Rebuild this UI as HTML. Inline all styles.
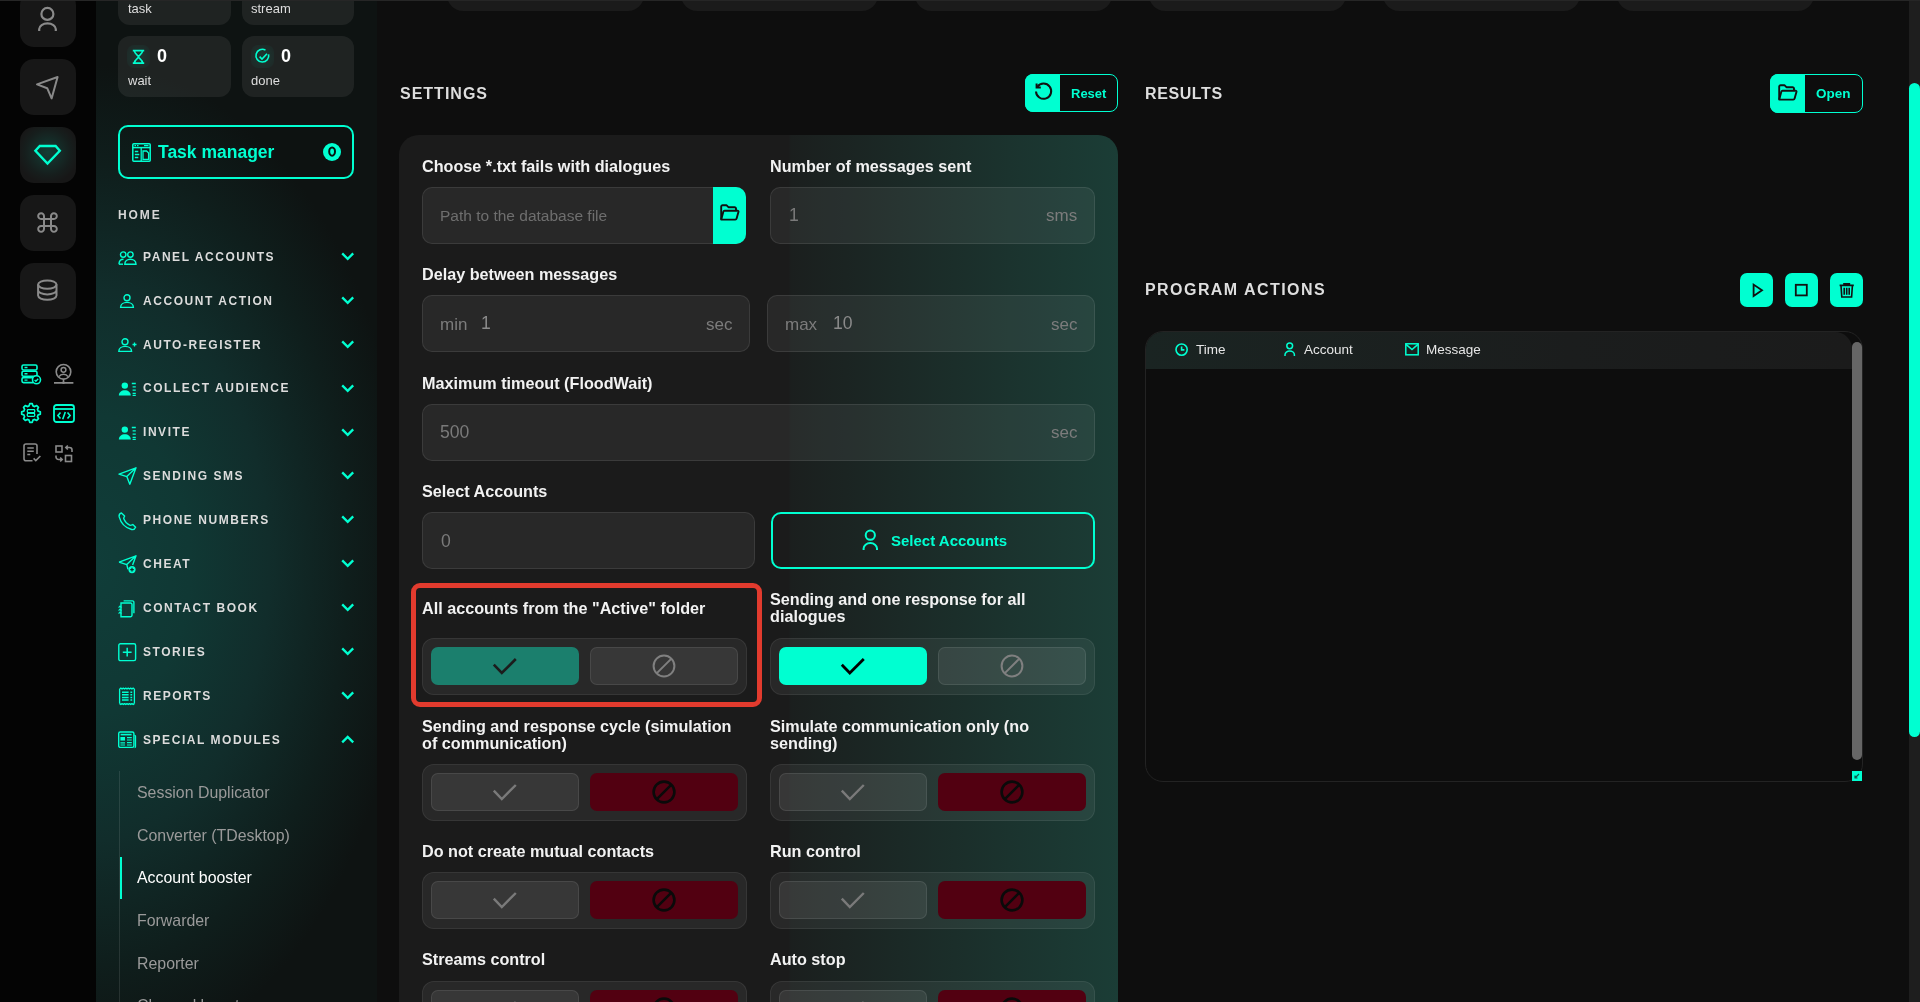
<!DOCTYPE html><html><head><meta charset="utf-8"><style>
html,body{margin:0;padding:0}
body{width:1920px;height:1002px;overflow:hidden;background:#0e0e0e;font-family:"Liberation Sans",sans-serif;position:relative}
.a{position:absolute;box-sizing:border-box}
.t{position:absolute;white-space:nowrap;will-change:transform}
svg{position:absolute;overflow:visible}
</style></head><body>
<div class="a" style="left:0px;top:0px;width:96px;height:1002px;background:#040404"></div>
<div class="a" style="left:20px;top:-9px;width:56px;height:56px;background:#171717;border-radius:14px"></div>
<div class="a" style="left:20px;top:59px;width:56px;height:56px;background:#171717;border-radius:14px"></div>
<div class="a" style="left:20px;top:127px;width:56px;height:56px;background:#171717;border-radius:14px"></div>
<div class="a" style="left:20px;top:195px;width:56px;height:56px;background:#171717;border-radius:14px"></div>
<div class="a" style="left:20px;top:263px;width:56px;height:56px;background:#171717;border-radius:14px"></div>
<div class="a" style="left:20px;top:127px;width:56px;height:56px;border-radius:14px;background:radial-gradient(circle at 50% 45%, rgba(0,255,209,0.16) 0%, rgba(0,255,209,0.09) 30%, rgba(0,255,209,0.03) 55%, rgba(0,0,0,0) 75%)"></div>
<svg style="left:0px;top:0px;" width="96" height="60" viewBox="0 0 96 60" fill="none"><circle cx="47.4" cy="13.9" r="6" stroke="#8a8a8a" stroke-width="2.2"/><path d="M39.2 31 V29 a8.3 5.6 0 0 1 16.6 0 V31" stroke="#8a8a8a" stroke-width="2.2"/></svg>
<svg style="left:0px;top:60px;" width="96" height="60" viewBox="0 0 96 60" fill="none"><path d="M37 24.4 L57.6 17 L51.6 38.4 L47.2 28.2 Z" stroke="#8a8a8a" stroke-width="2" stroke-linejoin="round"/></svg>
<svg style="left:0px;top:127px;" width="96" height="56" viewBox="0 0 96 56" fill="none"><path d="M39.8 19 H55.6 L59.8 23.8 L47.5 36.6 L35.4 23.8 Z" stroke="#00ffd1" stroke-width="2.4" stroke-linejoin="miter"/></svg>
<svg style="left:0px;top:195px;" width="96" height="56" viewBox="0 0 96 56" fill="none"><path d="M44 24 h7 v7 h-7 z M44 24 v-2.8 a2.9 2.9 0 1 0 -2.9 2.8 h2.9 M51 24 v-2.8 a2.9 2.9 0 1 1 2.9 2.8 h-2.9 M44 31 v2.8 a2.9 2.9 0 1 1 -2.9 -2.8 h2.9 M51 31 v2.8 a2.9 2.9 0 1 0 2.9 -2.8 h-2.9" stroke="#8a8a8a" stroke-width="2"/></svg>
<svg style="left:0px;top:263px;" width="96" height="56" viewBox="0 0 96 56" fill="none"><ellipse cx="47.3" cy="21.6" rx="9.2" ry="4.2" stroke="#8a8a8a" stroke-width="2"/><path d="M38.1 21.6 v11 a9.2 4.2 0 0 0 18.4 0 v-11 M38.1 27.2 a9.2 4.2 0 0 0 18.4 0" stroke="#8a8a8a" stroke-width="2"/></svg>
<svg style="left:21px;top:364px;" width="22" height="22" viewBox="0 0 22 22" fill="none"><rect x="1" y="1" width="15" height="5" rx="1.5" stroke="#00ffd1" stroke-width="1.6"/><rect x="1" y="7.3" width="15" height="5" rx="1.5" stroke="#00ffd1" stroke-width="1.6"/><path d="M16 13.6 H2.5 a1.5 1.5 0 0 0 -1.5 1.5 v2 a1.5 1.5 0 0 0 1.5 1.5 H12" stroke="#00ffd1" stroke-width="1.6"/><path d="M3.5 3.5 h3 M3.5 9.8 h3 M3.5 16.1 h3" stroke="#00ffd1" stroke-width="1.4"/><circle cx="15.5" cy="15.8" r="4" stroke="#00ffd1" stroke-width="1.6" fill="#000"/><path d="M13.6 15.9 l1.3 1.3 l2.3 -2.4" stroke="#00ffd1" stroke-width="1.4"/></svg>
<svg style="left:53px;top:363px;" width="22" height="22" viewBox="0 0 22 22" fill="none"><circle cx="10.5" cy="8.8" r="7.3" stroke="#8a8a8a" stroke-width="1.6"/><circle cx="10.5" cy="6.8" r="2.4" stroke="#8a8a8a" stroke-width="1.5"/><path d="M6 13.6 a5 4 0 0 1 9 0" stroke="#8a8a8a" stroke-width="1.5"/><path d="M10.5 16 v3.7 M1 19.9 h19.4" stroke="#8a8a8a" stroke-width="1.6"/><circle cx="10.5" cy="19.8" r="1.3" fill="#8a8a8a"/></svg>
<svg style="left:21px;top:403px;" width="21" height="21" viewBox="0 0 21 21" fill="none"><path d="M19.32 8.75 L19.32 11.25 L17.15 11.90 L16.40 13.72 L17.47 15.70 L15.70 17.47 L13.72 16.40 L11.90 17.15 L11.25 19.32 L8.75 19.32 L8.10 17.15 L6.28 16.40 L4.30 17.47 L2.53 15.70 L3.60 13.72 L2.85 11.90 L0.68 11.25 L0.68 8.75 L2.85 8.10 L3.60 6.28 L2.53 4.30 L4.30 2.53 L6.28 3.60 L8.10 2.85 L8.75 0.68 L11.25 0.68 L11.90 2.85 L13.72 3.60 L15.70 2.53 L17.47 4.30 L16.40 6.28 L17.15 8.10 Z" stroke="#00ffd1" stroke-width="1.7" stroke-linejoin="round"/><rect x="6.3" y="6.6" width="7.4" height="3" rx="0.8" stroke="#00ffd1" stroke-width="1.3"/><rect x="6.3" y="10.4" width="7.4" height="3" rx="0.8" stroke="#00ffd1" stroke-width="1.3"/></svg>
<svg style="left:53px;top:404px;" width="22" height="19" viewBox="0 0 22 19" fill="none"><rect x="1" y="1" width="20" height="17" rx="2.5" stroke="#00ffd1" stroke-width="1.8"/><path d="M1 5 h20" stroke="#00ffd1" stroke-width="1.8"/><path d="M7.5 8.5 l-2.6 3 l2.6 3 M14.5 8.5 l2.6 3 l-2.6 3 M12.3 8 l-2.6 7.2" stroke="#00ffd1" stroke-width="1.6"/></svg>
<svg style="left:23px;top:443px;" width="19" height="20" viewBox="0 0 19 20" fill="none"><path d="M9.5 17.8 H3 a2 2 0 0 1 -2 -2 V3 a2 2 0 0 1 2 -2 H12 a2 2 0 0 1 2 2 V11" stroke="#8a8a8a" stroke-width="1.6"/><path d="M4.3 5 h6.5 M4.3 8.3 h6.5 M4.3 11.6 h3" stroke="#8a8a8a" stroke-width="1.5"/><path d="M10.6 15.4 l2.2 2.2 l4.6 -4.6" stroke="#8a8a8a" stroke-width="1.6"/></svg>
<svg style="left:55px;top:445px;" width="19" height="18" viewBox="0 0 19 18" fill="none"><rect x="1" y="1" width="6" height="6" stroke="#8a8a8a" stroke-width="1.6"/><rect x="10.5" y="10.5" width="6" height="6" stroke="#8a8a8a" stroke-width="1.6"/><path d="M17 7 V5 a2.5 2.5 0 0 0 -2.5 -2.5 H11 M12.8 0.5 l-2 2 l2 2" stroke="#8a8a8a" stroke-width="1.6"/><path d="M1 10.5 V12 a2.5 2.5 0 0 0 2.5 2.5 H7 M5.2 12.5 l2 2 l-2 2" stroke="#8a8a8a" stroke-width="1.6"/></svg>
<div class="a" style="left:96px;top:0px;width:281px;height:1002px;background:radial-gradient(ellipse 315px 500px at 0px 565px, rgb(16,61,57) 0%, rgb(16,56,52) 30%, rgb(17,45,43) 55%, rgb(15,30,28) 80%, rgb(14,19,18) 100%)"></div>
<div class="a" style="left:118px;top:-40px;width:113px;height:65px;background:rgba(255,255,255,0.072);border-radius:12px"></div>
<div class="a" style="left:242px;top:-40px;width:112px;height:65px;background:rgba(255,255,255,0.072);border-radius:12px"></div>
<div class="t" style="left:127.5px;top:2.00px;font-size:13px;line-height:13px;color:#dedede;font-weight:400;letter-spacing:0px;">task</div>
<div class="t" style="left:251px;top:2.00px;font-size:13px;line-height:13px;color:#dedede;font-weight:400;letter-spacing:0px;">stream</div>
<div class="a" style="left:118px;top:36px;width:113px;height:61px;background:rgba(255,255,255,0.072);border-radius:12px"></div>
<div class="a" style="left:242px;top:36px;width:112px;height:61px;background:rgba(255,255,255,0.072);border-radius:12px"></div>
<div class="a" style="left:127px;top:45px;width:23px;height:23px;background:radial-gradient(circle, rgba(0,255,209,0.10) 0%, rgba(0,255,209,0.05) 55%, rgba(0,255,209,0.02) 100%);border-radius:7px"></div>
<div class="a" style="left:251px;top:45px;width:23px;height:23px;background:radial-gradient(circle, rgba(0,255,209,0.10) 0%, rgba(0,255,209,0.05) 55%, rgba(0,255,209,0.02) 100%);border-radius:7px"></div>
<svg style="left:127px;top:45px;" width="23" height="23" viewBox="0 0 23 23" fill="none"><path d="M5.8 5.6 h11.4 M5.8 18.2 h11.4" stroke="#00ffd1" stroke-width="1.8"/><path d="M7.4 5.6 C7.4 9.4 11.5 10.4 11.5 11.9 C11.5 13.4 7.4 14.4 7.4 18.2 M15.6 5.6 C15.6 9.4 11.5 10.4 11.5 11.9 C11.5 13.4 15.6 14.4 15.6 18.2" stroke="#00ffd1" stroke-width="1.6"/></svg>
<svg style="left:251px;top:45px;" width="23" height="23" viewBox="0 0 23 23" fill="none"><path d="M17.6 9.3 a6.4 6.4 0 1 1 -3.1 -4.2" stroke="#00ffd1" stroke-width="1.6"/><path d="M8.6 11.6 l2.4 2.4 l5 -5.2" stroke="#00ffd1" stroke-width="1.6"/></svg>
<div class="t" style="left:157px;top:47.26px;font-size:18px;line-height:18px;color:#fff;font-weight:700;letter-spacing:0px;">0</div>
<div class="t" style="left:280.5px;top:47.26px;font-size:18px;line-height:18px;color:#fff;font-weight:700;letter-spacing:0px;">0</div>
<div class="t" style="left:127.5px;top:74.00px;font-size:13px;line-height:13px;color:#dedede;font-weight:400;letter-spacing:0px;">wait</div>
<div class="t" style="left:251px;top:74.00px;font-size:13px;line-height:13px;color:#dedede;font-weight:400;letter-spacing:0px;">done</div>
<div class="a" style="left:118px;top:125px;width:236px;height:54px;border:2px solid #00ffd1;border-radius:10px;background:rgba(0,0,0,0.03)"></div>
<svg style="left:132px;top:143px;" width="19" height="19" viewBox="0 0 19 19" fill="none"><rect x="0.8" y="0.8" width="17.4" height="17.4" rx="1" stroke="#00ffd1" stroke-width="1.5"/><path d="M0.8 4.6 h17.4" stroke="#00ffd1" stroke-width="1.5"/><path d="M2.5 2.6 h1.5 M5 2.6 h1.5 M12 2.6 h4.5" stroke="#00ffd1" stroke-width="1.1"/><path d="M9.2 4.6 v13.6" stroke="#00ffd1" stroke-width="1.3"/><path d="M2.8 8.5 h3.5 M2.8 11.5 h4.5 M2.8 14.5 h3.5" stroke="#00ffd1" stroke-width="1.3"/><path d="M11 8 h3.6 l2 2 v6.4 h-5.6 z" stroke="#00ffd1" stroke-width="1.3"/></svg>
<div class="t" style="left:158px;top:144.19px;font-size:17.5px;line-height:17.5px;color:#00ffd1;font-weight:700;letter-spacing:0px;">Task manager</div>
<div class="a" style="left:323px;top:143px;width:18px;height:18px;background:#00ffd1;border-radius:50%"></div>
<svg style="left:323px;top:143px;" width="18" height="18" viewBox="0 0 18 18" fill="none"><ellipse cx="9.1" cy="8.6" rx="2.9" ry="4.1" stroke="#061310" stroke-width="2"/></svg>
<div class="t" style="left:118px;top:209.04px;font-size:12px;line-height:12px;color:#d6d6d6;font-weight:700;letter-spacing:1.9px;">HOME</div>
<svg style="left:118px;top:250.9px;" width="19" height="19" viewBox="0 0 19 19" fill="none"><circle cx="5.2" cy="3.6" r="2.7" stroke="#00ffd1" stroke-width="1.4"/><circle cx="12.4" cy="3.6" r="2.7" stroke="#00ffd1" stroke-width="1.4"/><path d="M1 13.2 c0 -3 1.8 -5 4.5 -5" stroke="#00ffd1" stroke-width="1.4"/><path d="M1 13.2 h4" stroke="#00ffd1" stroke-width="1.4"/><path d="M6.8 13.2 c0 -3 2.5 -5 5.6 -5 c3.1 0 5.6 2 5.6 5 z" stroke="#00ffd1" stroke-width="1.4"/></svg>
<div class="t" style="left:143px;top:250.74px;font-size:12px;line-height:12px;color:#dcdcdc;font-weight:700;letter-spacing:1.55px;">PANEL ACCOUNTS</div>
<svg style="left:341px;top:251.89999999999998px;" width="14" height="9" viewBox="0 0 14 9" fill="none"><path d="M1.2 1.4 L6.7 6.9 L12.2 1.4" stroke="#00ffd1" stroke-width="2.3"/></svg>
<svg style="left:118px;top:294.3px;" width="19" height="19" viewBox="0 0 19 19" fill="none"><circle cx="9" cy="3.8" r="3" stroke="#00ffd1" stroke-width="1.4"/><path d="M2.6 13.4 c0 -3 2.8 -5 6.4 -5 c3.6 0 6.4 2 6.4 5 z" stroke="#00ffd1" stroke-width="1.4"/></svg>
<div class="t" style="left:143px;top:294.64px;font-size:12px;line-height:12px;color:#dcdcdc;font-weight:700;letter-spacing:1.55px;">ACCOUNT ACTION</div>
<svg style="left:341px;top:295.79999999999995px;" width="14" height="9" viewBox="0 0 14 9" fill="none"><path d="M1.2 1.4 L6.7 6.9 L12.2 1.4" stroke="#00ffd1" stroke-width="2.3"/></svg>
<svg style="left:118px;top:338.2px;" width="19" height="19" viewBox="0 0 19 19" fill="none"><circle cx="7" cy="3.8" r="3" stroke="#00ffd1" stroke-width="1.4"/><path d="M0.8 13.4 c0 -3 2.8 -5 6.4 -5 c3.6 0 6.4 2 6.4 5 z" stroke="#00ffd1" stroke-width="1.4"/><path d="M14.5 6.5 h4 M16.5 4.5 v4" stroke="#00ffd1" stroke-width="1.3"/></svg>
<div class="t" style="left:143px;top:338.54px;font-size:12px;line-height:12px;color:#dcdcdc;font-weight:700;letter-spacing:1.55px;">AUTO-REGISTER</div>
<svg style="left:341px;top:339.7px;" width="14" height="9" viewBox="0 0 14 9" fill="none"><path d="M1.2 1.4 L6.7 6.9 L12.2 1.4" stroke="#00ffd1" stroke-width="2.3"/></svg>
<svg style="left:118px;top:382.1px;" width="19" height="19" viewBox="0 0 19 19" fill="none"><circle cx="6.8" cy="3.6" r="3.2" fill="#00ffd1"/><path d="M0.8 13.6 c0 -3.4 2.8 -5.4 6 -5.4 c3.2 0 6 2 6 5.4 z" fill="#00ffd1"/><path d="M13.8 1.5 h4 M14.6 4.8 h3.2 M14.6 8.1 h3.2 M14.6 11.4 h3.2 M14.6 13.3 h3.2" stroke="#00ffd1" stroke-width="1.3"/></svg>
<div class="t" style="left:143px;top:382.44px;font-size:12px;line-height:12px;color:#dcdcdc;font-weight:700;letter-spacing:1.55px;">COLLECT AUDIENCE</div>
<svg style="left:341px;top:383.59999999999997px;" width="14" height="9" viewBox="0 0 14 9" fill="none"><path d="M1.2 1.4 L6.7 6.9 L12.2 1.4" stroke="#00ffd1" stroke-width="2.3"/></svg>
<svg style="left:118px;top:425.5px;" width="19" height="19" viewBox="0 0 19 19" fill="none"><circle cx="6.8" cy="3.6" r="3.2" fill="#00ffd1"/><path d="M0.8 13.6 c0 -3.4 2.8 -5.4 6 -5.4 c3.2 0 6 2 6 5.4 z" fill="#00ffd1"/><path d="M13.8 1.5 h4 M14.6 4.8 h3.2 M14.6 8.1 h3.2 M14.6 11.4 h3.2 M14.6 13.3 h3.2" stroke="#00ffd1" stroke-width="1.3"/></svg>
<div class="t" style="left:143px;top:426.34px;font-size:12px;line-height:12px;color:#dcdcdc;font-weight:700;letter-spacing:1.55px;">INVITE</div>
<svg style="left:341px;top:427.5px;" width="14" height="9" viewBox="0 0 14 9" fill="none"><path d="M1.2 1.4 L6.7 6.9 L12.2 1.4" stroke="#00ffd1" stroke-width="2.3"/></svg>
<svg style="left:118px;top:467.4px;" width="19" height="19" viewBox="0 0 19 19" fill="none"><path d="M1 7.2 L18 0.8 L11.8 17.2 L8.8 9.6 Z M8.8 9.6 L18 0.8" stroke="#00ffd1" stroke-width="1.4" stroke-linejoin="round"/></svg>
<div class="t" style="left:143px;top:470.24px;font-size:12px;line-height:12px;color:#dcdcdc;font-weight:700;letter-spacing:1.55px;">SENDING SMS</div>
<svg style="left:341px;top:471.4px;" width="14" height="9" viewBox="0 0 14 9" fill="none"><path d="M1.2 1.4 L6.7 6.9 L12.2 1.4" stroke="#00ffd1" stroke-width="2.3"/></svg>
<svg style="left:118px;top:511.8px;" width="19" height="19" viewBox="0 0 19 19" fill="none"><path d="M3.4 0.9 c-1.8 0.7 -2.6 2.2 -2.2 4 c1.6 6 6.4 11 12.4 12.6 c1.8 0.5 3.2 -0.4 4 -2.2 l-2.8 -2.8 c-0.9 0.5 -1.8 0.9 -2.6 0.9 c-2.8 -1.1 -5.4 -3.9 -6.5 -6.8 c0 -0.9 0.5 -1.8 0.9 -2.5 z" stroke="#00ffd1" stroke-width="1.4" stroke-linejoin="round"/></svg>
<div class="t" style="left:143px;top:514.14px;font-size:12px;line-height:12px;color:#dcdcdc;font-weight:700;letter-spacing:1.55px;">PHONE NUMBERS</div>
<svg style="left:341px;top:515.3px;" width="14" height="9" viewBox="0 0 14 9" fill="none"><path d="M1.2 1.4 L6.7 6.9 L12.2 1.4" stroke="#00ffd1" stroke-width="2.3"/></svg>
<svg style="left:118px;top:555.2px;" width="19" height="19" viewBox="0 0 19 19" fill="none"><path d="M1 7.2 L18 0.8 L14.6 10 M10 14.2 L8.8 9.6 L1 7.2 M8.8 9.6 L18 0.8" stroke="#00ffd1" stroke-width="1.4" stroke-linejoin="round"/><circle cx="14" cy="14.6" r="3.6" fill="#00ffd1"/><path d="M12.2 14.6 h3.6 M14 12.8 v3.6" stroke="#0f2b27" stroke-width="1.2"/></svg>
<div class="t" style="left:143px;top:558.04px;font-size:12px;line-height:12px;color:#dcdcdc;font-weight:700;letter-spacing:1.55px;">CHEAT</div>
<svg style="left:341px;top:559.2px;" width="14" height="9" viewBox="0 0 14 9" fill="none"><path d="M1.2 1.4 L6.7 6.9 L12.2 1.4" stroke="#00ffd1" stroke-width="2.3"/></svg>
<svg style="left:118px;top:599.6px;" width="19" height="19" viewBox="0 0 19 19" fill="none"><path d="M3 3 h9.5 a1.5 1.5 0 0 1 1.5 1.5 v10.8 a1.5 1.5 0 0 1 -1.5 1.5 h-9.5 z" stroke="#00ffd1" stroke-width="1.4"/><path d="M5.6 0.9 h8.8 a1.5 1.5 0 0 1 1.5 1.5 v10.8" stroke="#00ffd1" stroke-width="1.4"/><path d="M0.6 7.6 l1.4 -1.4 l1.4 1.4 M0.6 10.6 l1.4 -1.4 l1.4 1.4 M0.6 13.6 l1.4 -1.4 l1.4 1.4" stroke="#00ffd1" stroke-width="1.2"/></svg>
<div class="t" style="left:143px;top:601.94px;font-size:12px;line-height:12px;color:#dcdcdc;font-weight:700;letter-spacing:1.55px;">CONTACT BOOK</div>
<svg style="left:341px;top:603.0999999999999px;" width="14" height="9" viewBox="0 0 14 9" fill="none"><path d="M1.2 1.4 L6.7 6.9 L12.2 1.4" stroke="#00ffd1" stroke-width="2.3"/></svg>
<svg style="left:118px;top:643.0px;" width="19" height="19" viewBox="0 0 19 19" fill="none"><rect x="0.8" y="0.8" width="16.8" height="16.8" rx="1.6" stroke="#00ffd1" stroke-width="1.4"/><path d="M9.2 4.8 v8.8 M4.8 9.2 h8.8" stroke="#00ffd1" stroke-width="1.5"/></svg>
<div class="t" style="left:143px;top:645.84px;font-size:12px;line-height:12px;color:#dcdcdc;font-weight:700;letter-spacing:1.55px;">STORIES</div>
<svg style="left:341px;top:647.0px;" width="14" height="9" viewBox="0 0 14 9" fill="none"><path d="M1.2 1.4 L6.7 6.9 L12.2 1.4" stroke="#00ffd1" stroke-width="2.3"/></svg>
<svg style="left:118px;top:687.9px;" width="19" height="19" viewBox="0 0 19 19" fill="none"><path d="M1.6 1 V15.6 M16.4 1 V15.6 M1.6 1 l1.233 -0.9 l1.233 0.9 l1.233 -0.9 l1.233 0.9 l1.233 -0.9 l1.233 0.9 l1.233 -0.9 l1.233 0.9 l1.233 -0.9 l1.233 0.9 l1.233 -0.9 l1.233 0.9 M1.6 15.6 l1.233 0.9 l1.233 -0.9 l1.233 0.9 l1.233 -0.9 l1.233 0.9 l1.233 -0.9 l1.233 0.9 l1.233 -0.9 l1.233 0.9 l1.233 -0.9 l1.233 0.9 l1.233 -0.9" stroke="#00ffd1" stroke-width="1.3" stroke-linejoin="round"/><path d="M4 4.2 h6.6 M4 6.8 h6.6 M4 9.4 h6.6 M4 12 h6.6 M12.4 4.2 h1.8 M12.4 6.8 h1.8 M12.4 9.4 h1.8 M12.4 12 h1.8" stroke="#00ffd1" stroke-width="1.5"/></svg>
<div class="t" style="left:143px;top:689.74px;font-size:12px;line-height:12px;color:#dcdcdc;font-weight:700;letter-spacing:1.55px;">REPORTS</div>
<svg style="left:341px;top:690.9px;" width="14" height="9" viewBox="0 0 14 9" fill="none"><path d="M1.2 1.4 L6.7 6.9 L12.2 1.4" stroke="#00ffd1" stroke-width="2.3"/></svg>
<svg style="left:118px;top:732.3px;" width="19" height="19" viewBox="0 0 19 19" fill="none"><rect x="0.7" y="0" width="15.2" height="15.4" rx="1.6" stroke="#00ffd1" stroke-width="1.4"/><path d="M16.4 3.4 h0.3 a0.8 0.8 0 0 1 0.8 0.8 V14.6 a0.9 0.9 0 0 1 -0.9 0.9" stroke="#00ffd1" stroke-width="1.3"/><path d="M2.6 2.6 h11" stroke="#00ffd1" stroke-width="1.6"/><rect x="2.4" y="5" width="4.6" height="3.6" fill="#00ffd1"/><path d="M2.4 10.8 h4.6 M2.4 13 h4.6 M9 5.6 h4.8 M9 8 h4.8 M9 10.6 h4.8 M9 13 h4.8" stroke="#00ffd1" stroke-width="1.2"/></svg>
<div class="t" style="left:143px;top:733.64px;font-size:12px;line-height:12px;color:#dcdcdc;font-weight:700;letter-spacing:1.55px;">SPECIAL MODULES</div>
<svg style="left:341px;top:734.8px;" width="14" height="9" viewBox="0 0 14 9" fill="none"><path d="M1.2 7.4 L6.7 1.9 L12.2 7.4" stroke="#00ffd1" stroke-width="2.3"/></svg>
<div class="a" style="left:119px;top:771px;width:1px;height:240px;background:rgba(255,255,255,0.1)"></div>
<div class="a" style="left:120px;top:857px;width:2.4px;height:42px;background:#00ffd1"></div>
<div class="t" style="left:137.4px;top:785.14px;font-size:15.9px;line-height:15.9px;color:#9a9a9a;font-weight:400;letter-spacing:0px;">Session Duplicator</div>
<div class="t" style="left:137.4px;top:827.74px;font-size:15.9px;line-height:15.9px;color:#9a9a9a;font-weight:400;letter-spacing:0px;">Converter (TDesktop)</div>
<div class="t" style="left:137.4px;top:870.34px;font-size:15.9px;line-height:15.9px;color:#fff;font-weight:400;letter-spacing:0px;">Account booster</div>
<div class="t" style="left:137.4px;top:912.94px;font-size:15.9px;line-height:15.9px;color:#9a9a9a;font-weight:400;letter-spacing:0px;">Forwarder</div>
<div class="t" style="left:137.4px;top:955.54px;font-size:15.9px;line-height:15.9px;color:#9a9a9a;font-weight:400;letter-spacing:0px;">Reporter</div>
<div class="t" style="left:137.4px;top:998.14px;font-size:15.9px;line-height:15.9px;color:#9a9a9a;font-weight:400;letter-spacing:0px;">Channel booster</div>
<div class="a" style="left:447px;top:-40px;width:197px;height:50.5px;background:#1b1b1b;border-radius:16px"></div>
<div class="a" style="left:681px;top:-40px;width:197px;height:50.5px;background:#1b1b1b;border-radius:16px"></div>
<div class="a" style="left:915px;top:-40px;width:197px;height:50.5px;background:#1b1b1b;border-radius:16px"></div>
<div class="a" style="left:1149px;top:-40px;width:197px;height:50.5px;background:#1b1b1b;border-radius:16px"></div>
<div class="a" style="left:1383px;top:-40px;width:197px;height:50.5px;background:#1b1b1b;border-radius:16px"></div>
<div class="a" style="left:1617px;top:-40px;width:197px;height:50.5px;background:#1b1b1b;border-radius:16px"></div>
<div class="t" style="left:399.6px;top:85.76px;font-size:16px;line-height:16px;color:#dedede;font-weight:700;letter-spacing:1.0px;">SETTINGS</div>
<div class="t" style="left:1145px;top:85.86px;font-size:16px;line-height:16px;color:#dedede;font-weight:700;letter-spacing:0.6px;">RESULTS</div>
<div class="t" style="left:1145.4px;top:281.76px;font-size:16px;line-height:16px;color:#dedede;font-weight:700;letter-spacing:1.44px;">PROGRAM ACTIONS</div>
<div class="a" style="left:1025px;top:74px;width:93px;height:38px;border:1px solid #00ffd1;border-radius:8px;background:#0d0d0d;overflow:hidden"></div>
<div class="a" style="left:1025px;top:74px;width:35px;height:38px;background:#00ffd1;border-radius:8px 0 0 8px"></div>
<svg style="left:1034px;top:82px;" width="19" height="19" viewBox="0 0 19 19" fill="none"><path d="M3.4 4.8 A7.6 7.6 0 1 1 2 9.5" stroke="#111" stroke-width="2"/><path d="M2.6 1.4 V5.6 H6.8" stroke="#111" stroke-width="2"/></svg>
<div class="t" style="left:1071px;top:86.70px;font-size:13px;line-height:13px;color:#00ffd1;font-weight:700;letter-spacing:0px;">Reset</div>
<div class="a" style="left:1770px;top:74px;width:93px;height:39px;border:1px solid #00ffd1;border-radius:8px;background:#0d0d0d"></div>
<div class="a" style="left:1770px;top:74px;width:35px;height:39px;background:#00ffd1;border-radius:8px 0 0 8px"></div>
<svg style="left:1777px;top:84px;" width="21" height="17" viewBox="0 0 21 17" fill="none"><path d="M2.2 15.6 V2.6 a1.4 1.4 0 0 1 1.4 -1.4 H7.4 l2 2 H15.6 a1.4 1.4 0 0 1 1.4 1.4 v1.6" stroke="#111" stroke-width="1.9" stroke-linejoin="round"/><path d="M2.2 15.6 L4.4 7.6 a1.2 1.2 0 0 1 1.2 -0.9 H18.6 a0.9 0.9 0 0 1 0.9 1.1 L17.6 14.6 a1.4 1.4 0 0 1 -1.4 1 z" stroke="#111" stroke-width="1.9" stroke-linejoin="round"/></svg>
<div class="t" style="left:1816.4px;top:86.67px;font-size:13.5px;line-height:13.5px;color:#00ffd1;font-weight:700;letter-spacing:0px;">Open</div>
<div class="a" style="left:1740px;top:273px;width:33px;height:34px;background:#00ffd1;border-radius:7px"></div>
<div class="a" style="left:1785px;top:273px;width:33px;height:34px;background:#00ffd1;border-radius:7px"></div>
<div class="a" style="left:1830px;top:273px;width:33px;height:34px;background:#00ffd1;border-radius:7px"></div>
<svg style="left:1740px;top:273px;" width="33" height="34" viewBox="0 0 33 34" fill="none"><path d="M13.6 11.6 V23 L22 17.3 Z" stroke="#111" stroke-width="1.8" stroke-linejoin="miter"/></svg>
<svg style="left:1785px;top:273px;" width="33" height="34" viewBox="0 0 33 34" fill="none"><rect x="10.8" y="11.8" width="11" height="10.6" stroke="#111" stroke-width="1.8"/></svg>
<svg style="left:1830px;top:273px;" width="33" height="34" viewBox="0 0 33 34" fill="none"><path d="M9.6 12.4 h14.2 M14 12.4 v-1.6 h5.4 v1.6 M11 12.6 l0.8 11.4 h9.8 l0.8 -11.4 M14.2 14.8 v7 M16.7 14.8 v7 M19.2 14.8 v7" stroke="#111" stroke-width="1.6"/></svg>
<div class="a" style="left:1145px;top:331px;width:718px;height:451px;border:1px solid #232323;border-radius:18px;background:#0d0d0d;overflow:hidden"></div>
<div class="a" style="left:1146px;top:332px;width:706px;height:37px;background:linear-gradient(90deg,#1a2422 0%,#1b1d1d 60%,#1b1b1b 100%);border-radius:17px 17px 0 0"></div>
<svg style="left:1175px;top:343px;" width="14" height="14" viewBox="0 0 14 14" fill="none"><circle cx="6.6" cy="6.6" r="5.6" stroke="#00ffd1" stroke-width="1.6"/><path d="M6.6 3.4 V6.9 H9.4" stroke="#00ffd1" stroke-width="1.6"/></svg>
<div class="t" style="left:1196px;top:342.97px;font-size:13.5px;line-height:13.5px;color:#e6e6e6;font-weight:400;letter-spacing:0px;">Time</div>
<svg style="left:1284px;top:342px;" width="12" height="15" viewBox="0 0 12 15" fill="none"><circle cx="5.7" cy="3.8" r="2.9" stroke="#00ffd1" stroke-width="1.5"/><path d="M1 14 v-1.2 a4.7 3.8 0 0 1 9.4 0 V14" stroke="#00ffd1" stroke-width="1.5"/></svg>
<div class="t" style="left:1304px;top:342.97px;font-size:13.5px;line-height:13.5px;color:#e6e6e6;font-weight:400;letter-spacing:0px;">Account</div>
<svg style="left:1405px;top:343px;" width="14" height="13" viewBox="0 0 14 13" fill="none"><rect x="0.8" y="0.8" width="12.4" height="11" stroke="#00ffd1" stroke-width="1.5"/><path d="M1 1.4 L7 6.6 L13 1.4" stroke="#00ffd1" stroke-width="1.5"/></svg>
<div class="t" style="left:1425.8px;top:342.97px;font-size:13.5px;line-height:13.5px;color:#e6e6e6;font-weight:400;letter-spacing:0px;">Message</div>
<div class="a" style="left:1852px;top:342px;width:10px;height:418px;background:#666;border-radius:5px"></div>
<div class="a" style="left:1852px;top:771px;width:10px;height:10px;background:#00ffd1"></div>
<svg style="left:1852px;top:771px;" width="10" height="10" viewBox="0 0 10 10" fill="none"><path d="M3 7 L7 3 M3 4.5 V7 H5.5" stroke="#0a5a4c" stroke-width="1.2"/></svg>
<div class="a" style="left:1909px;top:0px;width:11px;height:1002px;background:#1e1e1e"></div>
<div class="a" style="left:1909px;top:83px;width:11px;height:654px;background:#00ffd1;border-radius:6px"></div>
<div class="a" style="left:399px;top:135px;width:719px;height:1000px;background:linear-gradient(90deg,#1b1b1b 0%,#1b1b1b 54.2%,rgb(27,31,30) 54.5%,rgb(27,61,54) 100%);border-radius:20px"></div>
<div class="t" style="left:422px;top:157.89px;font-size:16.2px;line-height:16.2px;color:#f2f2f2;font-weight:700;letter-spacing:0px;">Choose *.txt fails with dialogues</div>
<div class="t" style="left:770px;top:157.89px;font-size:16.2px;line-height:16.2px;color:#f2f2f2;font-weight:700;letter-spacing:0px;">Number of messages sent</div>
<div class="a" style="left:422px;top:187px;width:324px;height:57px;background:rgba(255,255,255,0.06);border:1px solid rgba(255,255,255,0.09);border-radius:10px"></div>
<div class="a" style="left:713px;top:187px;width:33px;height:57px;background:#00ffd1;border-radius:0 10px 10px 0"></div>
<svg style="left:719px;top:204px;" width="21" height="17" viewBox="0 0 21 17" fill="none"><path d="M2.2 15.6 V2.6 a1.4 1.4 0 0 1 1.4 -1.4 H7.4 l2 2 H15.6 a1.4 1.4 0 0 1 1.4 1.4 v1.6" stroke="#111" stroke-width="1.9" stroke-linejoin="round"/><path d="M2.2 15.6 L4.4 7.6 a1.2 1.2 0 0 1 1.2 -0.9 H18.6 a0.9 0.9 0 0 1 0.9 1.1 L17.6 14.6 a1.4 1.4 0 0 1 -1.4 1 z" stroke="#111" stroke-width="1.9" stroke-linejoin="round"/></svg>
<div class="t" style="left:440px;top:208.48px;font-size:15.5px;line-height:15.5px;color:#6e6e6e;font-weight:400;letter-spacing:0px;">Path to the database file</div>
<div class="a" style="left:770px;top:187px;width:325px;height:57px;background:rgba(255,255,255,0.06);border:1px solid rgba(255,255,255,0.09);border-radius:10px"></div>
<div class="t" style="left:789px;top:207.10px;font-size:17.6px;line-height:17.6px;color:#7a7a7a;font-weight:400;letter-spacing:0px;">1</div>
<div class="t" style="right:843px;top:206.61px;font-size:17px;line-height:17px;color:#7c7c7c;font-weight:400;letter-spacing:0px">sms</div>
<div class="t" style="left:422px;top:266.29px;font-size:16.2px;line-height:16.2px;color:#f2f2f2;font-weight:700;letter-spacing:0px;">Delay between messages</div>
<div class="a" style="left:422px;top:295px;width:328px;height:57px;background:rgba(255,255,255,0.06);border:1px solid rgba(255,255,255,0.09);border-radius:10px"></div>
<div class="t" style="left:440.4px;top:315.61px;font-size:17px;line-height:17px;color:#7c7c7c;font-weight:400;letter-spacing:0px;">min</div>
<div class="t" style="left:481px;top:315.10px;font-size:17.6px;line-height:17.6px;color:#8a8a8a;font-weight:400;letter-spacing:0px;">1</div>
<div class="t" style="right:1188px;top:315.61px;font-size:17px;line-height:17px;color:#7c7c7c;font-weight:400;letter-spacing:0px">sec</div>
<div class="a" style="left:767px;top:295px;width:328px;height:57px;background:rgba(255,255,255,0.06);border:1px solid rgba(255,255,255,0.09);border-radius:10px"></div>
<div class="t" style="left:785.4px;top:315.61px;font-size:17px;line-height:17px;color:#7c7c7c;font-weight:400;letter-spacing:0px;">max</div>
<div class="t" style="left:833px;top:315.10px;font-size:17.6px;line-height:17.6px;color:#8a8a8a;font-weight:400;letter-spacing:0px;">10</div>
<div class="t" style="right:843px;top:315.61px;font-size:17px;line-height:17px;color:#7c7c7c;font-weight:400;letter-spacing:0px">sec</div>
<div class="t" style="left:422px;top:374.89px;font-size:16.2px;line-height:16.2px;color:#f2f2f2;font-weight:700;letter-spacing:0px;">Maximum timeout (FloodWait)</div>
<div class="a" style="left:422px;top:404px;width:673px;height:57px;background:rgba(255,255,255,0.06);border:1px solid rgba(255,255,255,0.09);border-radius:10px"></div>
<div class="t" style="left:440px;top:424.00px;font-size:17.6px;line-height:17.6px;color:#7a7a7a;font-weight:400;letter-spacing:0px;">500</div>
<div class="t" style="right:843px;top:423.51px;font-size:17px;line-height:17px;color:#7c7c7c;font-weight:400;letter-spacing:0px">sec</div>
<div class="t" style="left:422px;top:482.99px;font-size:16.2px;line-height:16.2px;color:#f2f2f2;font-weight:700;letter-spacing:0px;">Select Accounts</div>
<div class="a" style="left:422px;top:512px;width:333px;height:57px;background:rgba(255,255,255,0.06);border:1px solid rgba(255,255,255,0.09);border-radius:10px"></div>
<div class="t" style="left:440.5px;top:532.60px;font-size:17.6px;line-height:17.6px;color:#7a7a7a;font-weight:400;letter-spacing:0px;">0</div>
<div class="a" style="left:771px;top:512px;width:324px;height:57px;border:2px solid #00ffd1;border-radius:10px"></div>
<svg style="left:862px;top:529px;" width="17" height="22" viewBox="0 0 17 22" fill="none"><circle cx="8.3" cy="6.2" r="4.6" stroke="#00ffd1" stroke-width="2"/><path d="M1.6 21 v-1.5 a6.7 5.4 0 0 1 13.4 0 V21" stroke="#00ffd1" stroke-width="2"/></svg>
<div class="t" style="left:890.6px;top:533.30px;font-size:15px;line-height:15px;color:#00ffd1;font-weight:700;letter-spacing:0px;">Select Accounts</div>
<div class="a" style="left:411px;top:583px;width:351px;height:124px;border:5px solid #e23b2e;border-radius:9px"></div>
<div class="t" style="left:422px;top:600.39px;font-size:16.2px;line-height:16.2px;color:#f2f2f2;font-weight:700;letter-spacing:0px;">All accounts from the "Active" folder</div>
<div class="t" style="left:770px;top:591.29px;font-size:16.2px;line-height:16.2px;color:#f2f2f2;font-weight:700;letter-spacing:0px;">Sending and one response for all</div>
<div class="t" style="left:770px;top:608.49px;font-size:16.2px;line-height:16.2px;color:#f2f2f2;font-weight:700;letter-spacing:0px;">dialogues</div>
<div class="a" style="left:422px;top:638px;width:325px;height:57px;background:rgba(255,255,255,0.06);border:1px solid rgba(255,255,255,0.07);border-radius:12px"></div>
<div class="a" style="left:431px;top:647px;width:148px;height:38px;background:#1b7f6d;border-radius:7px"></div>
<div class="a" style="left:590px;top:647px;width:148px;height:38px;background:rgba(255,255,255,0.07);border:1px solid rgba(255,255,255,0.09);border-radius:7px"></div>
<svg style="left:505px;top:666px;" width="1" height="1" viewBox="0 0 1 1" fill="none"><path d="M-11.2 -1.3 L-3.2 7 L10.8 -7" stroke="#1c1c1c" stroke-width="2.6"/></svg>
<svg style="left:664px;top:666px;" width="1" height="1" viewBox="0 0 1 1" fill="none"><circle cx="0" cy="0" r="10.4" stroke="#808080" stroke-width="2"/><path d="M-7.4 7.4 L7.4 -7.4" stroke="#808080" stroke-width="2"/></svg>
<div class="a" style="left:770px;top:638px;width:325px;height:57px;background:rgba(255,255,255,0.06);border:1px solid rgba(255,255,255,0.07);border-radius:12px"></div>
<div class="a" style="left:779px;top:647px;width:148px;height:38px;background:#00ffd1;border-radius:7px"></div>
<div class="a" style="left:938px;top:647px;width:148px;height:38px;background:rgba(255,255,255,0.07);border:1px solid rgba(255,255,255,0.09);border-radius:7px"></div>
<svg style="left:853px;top:666px;" width="1" height="1" viewBox="0 0 1 1" fill="none"><path d="M-11.2 -1.3 L-3.2 7 L10.8 -7" stroke="#000" stroke-width="2.8"/></svg>
<svg style="left:1012px;top:666px;" width="1" height="1" viewBox="0 0 1 1" fill="none"><circle cx="0" cy="0" r="10.4" stroke="#808080" stroke-width="2"/><path d="M-7.4 7.4 L7.4 -7.4" stroke="#808080" stroke-width="2"/></svg>
<div class="t" style="left:422px;top:718.19px;font-size:16.2px;line-height:16.2px;color:#f2f2f2;font-weight:700;letter-spacing:0px;">Sending and response cycle (simulation</div>
<div class="t" style="left:422px;top:734.79px;font-size:16.2px;line-height:16.2px;color:#f2f2f2;font-weight:700;letter-spacing:0px;">of communication)</div>
<div class="t" style="left:770px;top:718.19px;font-size:16.2px;line-height:16.2px;color:#f2f2f2;font-weight:700;letter-spacing:0px;">Simulate communication only (no</div>
<div class="t" style="left:770px;top:734.79px;font-size:16.2px;line-height:16.2px;color:#f2f2f2;font-weight:700;letter-spacing:0px;">sending)</div>
<div class="a" style="left:422px;top:764px;width:325px;height:57px;background:rgba(255,255,255,0.06);border:1px solid rgba(255,255,255,0.07);border-radius:12px"></div>
<div class="a" style="left:431px;top:773px;width:148px;height:38px;background:rgba(255,255,255,0.07);border:1px solid rgba(255,255,255,0.09);border-radius:7px"></div>
<div class="a" style="left:590px;top:773px;width:148px;height:38px;background:#520011;border-radius:7px"></div>
<svg style="left:505px;top:792px;" width="1" height="1" viewBox="0 0 1 1" fill="none"><path d="M-11.2 -1.3 L-3.2 7 L10.8 -7" stroke="#7a7a7a" stroke-width="2.4"/></svg>
<svg style="left:664px;top:792px;" width="1" height="1" viewBox="0 0 1 1" fill="none"><circle cx="0" cy="0" r="10.4" stroke="#0a0a0a" stroke-width="2.6"/><path d="M-7.4 7.4 L7.4 -7.4" stroke="#0a0a0a" stroke-width="2.6"/></svg>
<div class="a" style="left:770px;top:764px;width:325px;height:57px;background:rgba(255,255,255,0.06);border:1px solid rgba(255,255,255,0.07);border-radius:12px"></div>
<div class="a" style="left:779px;top:773px;width:148px;height:38px;background:rgba(255,255,255,0.07);border:1px solid rgba(255,255,255,0.09);border-radius:7px"></div>
<div class="a" style="left:938px;top:773px;width:148px;height:38px;background:#520011;border-radius:7px"></div>
<svg style="left:853px;top:792px;" width="1" height="1" viewBox="0 0 1 1" fill="none"><path d="M-11.2 -1.3 L-3.2 7 L10.8 -7" stroke="#7a7a7a" stroke-width="2.4"/></svg>
<svg style="left:1012px;top:792px;" width="1" height="1" viewBox="0 0 1 1" fill="none"><circle cx="0" cy="0" r="10.4" stroke="#0a0a0a" stroke-width="2.6"/><path d="M-7.4 7.4 L7.4 -7.4" stroke="#0a0a0a" stroke-width="2.6"/></svg>
<div class="t" style="left:422px;top:843.49px;font-size:16.2px;line-height:16.2px;color:#f2f2f2;font-weight:700;letter-spacing:0px;">Do not create mutual contacts</div>
<div class="t" style="left:770px;top:843.49px;font-size:16.2px;line-height:16.2px;color:#f2f2f2;font-weight:700;letter-spacing:0px;">Run control</div>
<div class="a" style="left:422px;top:872px;width:325px;height:57px;background:rgba(255,255,255,0.06);border:1px solid rgba(255,255,255,0.07);border-radius:12px"></div>
<div class="a" style="left:431px;top:881px;width:148px;height:38px;background:rgba(255,255,255,0.07);border:1px solid rgba(255,255,255,0.09);border-radius:7px"></div>
<div class="a" style="left:590px;top:881px;width:148px;height:38px;background:#520011;border-radius:7px"></div>
<svg style="left:505px;top:900px;" width="1" height="1" viewBox="0 0 1 1" fill="none"><path d="M-11.2 -1.3 L-3.2 7 L10.8 -7" stroke="#7a7a7a" stroke-width="2.4"/></svg>
<svg style="left:664px;top:900px;" width="1" height="1" viewBox="0 0 1 1" fill="none"><circle cx="0" cy="0" r="10.4" stroke="#0a0a0a" stroke-width="2.6"/><path d="M-7.4 7.4 L7.4 -7.4" stroke="#0a0a0a" stroke-width="2.6"/></svg>
<div class="a" style="left:770px;top:872px;width:325px;height:57px;background:rgba(255,255,255,0.06);border:1px solid rgba(255,255,255,0.07);border-radius:12px"></div>
<div class="a" style="left:779px;top:881px;width:148px;height:38px;background:rgba(255,255,255,0.07);border:1px solid rgba(255,255,255,0.09);border-radius:7px"></div>
<div class="a" style="left:938px;top:881px;width:148px;height:38px;background:#520011;border-radius:7px"></div>
<svg style="left:853px;top:900px;" width="1" height="1" viewBox="0 0 1 1" fill="none"><path d="M-11.2 -1.3 L-3.2 7 L10.8 -7" stroke="#7a7a7a" stroke-width="2.4"/></svg>
<svg style="left:1012px;top:900px;" width="1" height="1" viewBox="0 0 1 1" fill="none"><circle cx="0" cy="0" r="10.4" stroke="#0a0a0a" stroke-width="2.6"/><path d="M-7.4 7.4 L7.4 -7.4" stroke="#0a0a0a" stroke-width="2.6"/></svg>
<div class="t" style="left:422px;top:951.29px;font-size:16.2px;line-height:16.2px;color:#f2f2f2;font-weight:700;letter-spacing:0px;">Streams control</div>
<div class="t" style="left:770px;top:951.29px;font-size:16.2px;line-height:16.2px;color:#f2f2f2;font-weight:700;letter-spacing:0px;">Auto stop</div>
<div class="a" style="left:422px;top:981px;width:325px;height:57px;background:rgba(255,255,255,0.06);border:1px solid rgba(255,255,255,0.07);border-radius:12px"></div>
<div class="a" style="left:431px;top:990px;width:148px;height:38px;background:rgba(255,255,255,0.07);border:1px solid rgba(255,255,255,0.09);border-radius:7px"></div>
<div class="a" style="left:590px;top:990px;width:148px;height:38px;background:#520011;border-radius:7px"></div>
<svg style="left:505px;top:1009px;" width="1" height="1" viewBox="0 0 1 1" fill="none"><path d="M-11.2 -1.3 L-3.2 7 L10.8 -7" stroke="#7a7a7a" stroke-width="2.4"/></svg>
<svg style="left:664px;top:1009px;" width="1" height="1" viewBox="0 0 1 1" fill="none"><circle cx="0" cy="0" r="10.4" stroke="#0a0a0a" stroke-width="2.6"/><path d="M-7.4 7.4 L7.4 -7.4" stroke="#0a0a0a" stroke-width="2.6"/></svg>
<div class="a" style="left:770px;top:981px;width:325px;height:57px;background:rgba(255,255,255,0.06);border:1px solid rgba(255,255,255,0.07);border-radius:12px"></div>
<div class="a" style="left:779px;top:990px;width:148px;height:38px;background:rgba(255,255,255,0.07);border:1px solid rgba(255,255,255,0.09);border-radius:7px"></div>
<div class="a" style="left:938px;top:990px;width:148px;height:38px;background:#520011;border-radius:7px"></div>
<svg style="left:853px;top:1009px;" width="1" height="1" viewBox="0 0 1 1" fill="none"><path d="M-11.2 -1.3 L-3.2 7 L10.8 -7" stroke="#7a7a7a" stroke-width="2.4"/></svg>
<svg style="left:1012px;top:1009px;" width="1" height="1" viewBox="0 0 1 1" fill="none"><circle cx="0" cy="0" r="10.4" stroke="#0a0a0a" stroke-width="2.6"/><path d="M-7.4 7.4 L7.4 -7.4" stroke="#0a0a0a" stroke-width="2.6"/></svg>
<div class="a" style="left:0px;top:0px;width:1920px;height:1px;background:#262626"></div>
</body></html>
